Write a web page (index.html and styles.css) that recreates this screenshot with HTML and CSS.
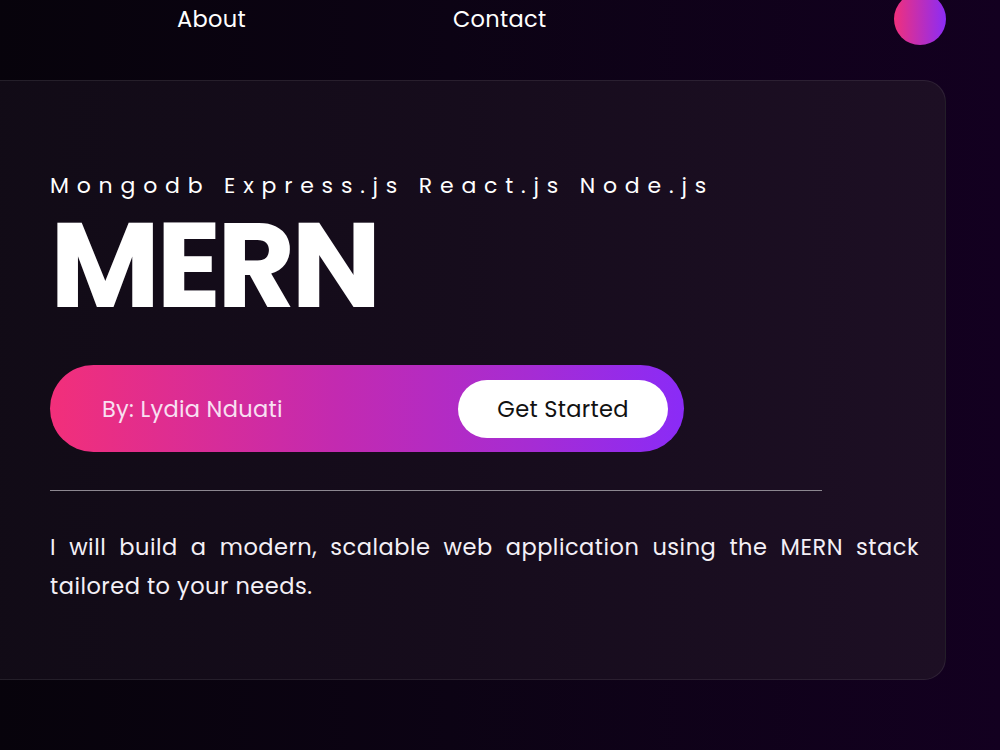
FILE: index.html
```html
<!DOCTYPE html>
<html lang="en">
<head>
<meta charset="utf-8">
<title>MERN — Lydia Nduati</title>
<link rel="stylesheet" href="styles.css">
</head>
<body>
<div class="page">
  <header class="topbar">
    <nav class="nav">
      <a class="nav-link" href="#about">About</a>
      <a class="nav-link" href="#contact">Contact</a>
    </nav>
    <span class="avatar"></span>
  </header>

  <section class="hero-card">
    <p class="stack">Mongodb Express.js React.js Node.js</p>
    <h1 class="title">MERN</h1>
    <div class="author-pill">
      <span class="author">By: Lydia Nduati</span>
      <a class="cta" href="#start">Get Started</a>
    </div>
    <hr class="divider">
    <p class="intro">I will build a modern, scalable web application using the MERN stack tailored to your needs.</p>
  </section>
</div>
</body>
</html>
```

FILE: styles.css
```css
* {
  box-sizing: border-box;
}

html, body {
  margin: 0;
  height: 100%;
}

body {
  background: linear-gradient(90deg, #07030b 0%, #0c0314 45%, #130020 100%);
  font-family: "Poppins", "Inter", "Noto Sans", sans-serif;
  color: #ffffff;
  overflow: hidden;
}

.page {
  margin-top: -7px;
  padding-right: 54px;
}

/* top navigation row */
.topbar {
  display: flex;
  align-items: center;
  height: 52px;
  padding-left: 177px;
}

.nav {
  display: flex;
  gap: 207px;
}

.nav-link {
  color: #ffffff;
  text-decoration: none;
  font-size: 22.5px;
  letter-spacing: 0.3px;
  font-weight: 400;
}

.avatar {
  margin-left: auto;
  width: 52px;
  height: 52px;
  border-radius: 50%;
  background: linear-gradient(90deg, #f0307c 0%, #8b2cf6 100%);
}

/* main card */
.hero-card {
  margin-top: 35px;
  margin-left: -30px;
  height: 600px;
  padding: 90px 26px 0 80px;
  border: 1px solid rgba(255, 255, 255, 0.08);
  border-left: none;
  border-radius: 0 22px 22px 0;
  background: linear-gradient(90deg, #110b16 0%, #160c1c 50%, #1d0f24 100%);
}

.stack {
  margin: 0;
  font-size: 22px;
  line-height: 30px;
  letter-spacing: 7.8px;
  font-weight: 400;
}

.title {
  margin: 1px 0 0 0;
  font-size: 120px;
  line-height: 126px;
  font-weight: 700;
  letter-spacing: -4px;
}

.author-pill {
  display: flex;
  align-items: center;
  justify-content: space-between;
  width: 634px;
  height: 87px;
  margin-top: 37px;
  padding: 0 16px 0 52px;
  border-radius: 44px;
  background: linear-gradient(90deg, #f22f7a 0%, #c32ab0 45%, #a72cd2 75%, #8a2bf7 100%);
}

.author {
  font-size: 22.5px;
  letter-spacing: 0.3px;
  color: #f8e0f2;
}

.cta {
  display: flex;
  align-items: center;
  justify-content: center;
  width: 210px;
  height: 58px;
  border-radius: 29px;
  background: #ffffff;
  color: #111111;
  text-decoration: none;
  font-size: 22.5px;
  letter-spacing: 0.3px;
}

.divider {
  width: 772px;
  margin: 38px 0 0 0;
  border: none;
  border-top: 1px solid #8c8790;
}

.intro {
  margin: 37px 0 0 0;
  font-size: 22.5px;
  line-height: 39px;
  letter-spacing: 0.5px;
  text-align: justify;
  color: #f4f0f6;
}
```
